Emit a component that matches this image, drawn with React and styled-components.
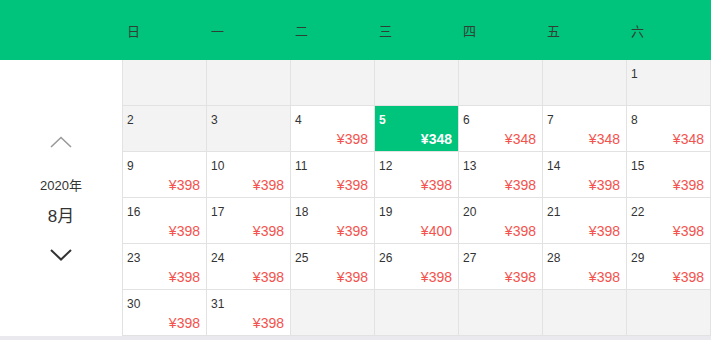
import React from "react";
import styled, { createGlobalStyle } from "styled-components";

const Global = createGlobalStyle`
  html, body { margin: 0; padding: 0; background: #eaeaee; }
  body { font-family: "Liberation Sans", "Noto Sans CJK SC", sans-serif; }
`;

const Page = styled.div`
  width: 711px;
  height: 336px;
  background: #fff;
  display: flex;
  flex-direction: column;
`;

const Header = styled.div`
  height: 60px;
  background: #00c47b;
  display: grid;
  grid-template-columns: 122px repeat(7, 84px);
  align-items: center;
`;

const WeekName = styled.div`
  padding-left: 5px;
  font-size: 13px;
  color: #2f3f36;
  font-family: "Noto Sans CJK SC", sans-serif;
`;

const Body = styled.div`
  flex: 1;
  display: flex;
`;

const Side = styled.div`
  width: 122px;
  display: flex;
  flex-direction: column;
  align-items: center;
  padding-top: 76px;
`;

const Arrow = styled.svg`
  display: block;
  margin-top: ${(p) => p.$gap || 0}px;
`;

const Year = styled.div`
  margin-top: 27px;
  font-size: 13px;
  color: #333;
  font-family: "Liberation Sans", "Noto Sans CJK SC", sans-serif;
`;

const Month = styled.div`
  margin-top: 8px;
  font-size: 17px;
  color: #333;
  font-family: "Liberation Sans", "Noto Sans CJK SC", sans-serif;
`;

const Grid = styled.div`
  display: grid;
  grid-template-columns: repeat(7, 84px);
  grid-auto-rows: 46px;
  border-left: 1px solid #e2e2e2;
`;

const Cell = styled.div`
  box-sizing: border-box;
  border-right: 1px solid #e2e2e2;
  border-bottom: 1px solid #e2e2e2;
  background: ${(p) => (p.$active ? "#00c47b" : p.$muted ? "#f3f3f3" : "#fff")};
  color: ${(p) => (p.$active ? "#fff" : "#333")};
  font-weight: ${(p) => (p.$active ? "bold" : "normal")};
  padding: 7px 6px 0 4px;
  display: flex;
  flex-direction: column;
`;

const Day = styled.div`
  font-size: 12px;
  line-height: 14px;
`;

const Price = styled.div`
  margin-top: 3px;
  text-align: right;
  font-size: 14px;
  line-height: 18px;
  color: ${(p) => (p.$active ? "#fff" : "#f4524d")};
`;

const weeks = ["日", "一", "二", "三", "四", "五", "六"];

const prices = {
  4: 398, 5: 348, 6: 348, 7: 348, 8: 348, 19: 400,
};

function buildCells() {
  const cells = [];
  for (let i = 0; i < 6; i++) cells.push({ key: "b" + i, empty: true });
  for (let d = 1; d <= 31; d++) {
    const past = d <= 3;
    cells.push({
      key: "d" + d,
      day: d,
      past,
      price: past ? null : prices[d] || 398,
      active: d === 5,
    });
  }
  while (cells.length < 42) cells.push({ key: "a" + cells.length, empty: true });
  return cells;
}

export default function App() {
  const cells = buildCells();
  return (
    <>
      <Global />
      <Page>
        <Header>
          <div />
          {weeks.map((w) => (
            <WeekName key={w}>{w}</WeekName>
          ))}
        </Header>
        <Body>
          <Side>
            <Arrow width="22" height="12" viewBox="0 0 22 12">
              <path d="M1 11 L11 1.5 L21 11" fill="none" stroke="#9a9a9a" strokeWidth="1.6" />
            </Arrow>
            <Year>2020年</Year>
            <Month>8月</Month>
            <Arrow width="22" height="12" viewBox="0 0 22 12" $gap={22}>
              <path d="M1 1 L11 10.5 L21 1" fill="none" stroke="#333" strokeWidth="2" />
            </Arrow>
          </Side>
          <Grid>
            {cells.map((c) =>
              c.empty ? (
                <Cell key={c.key} $muted />
              ) : (
                <Cell key={c.key} $muted={c.past} $active={c.active}>
                  <Day>{c.day}</Day>
                  {c.price && <Price $active={c.active}>¥{c.price}</Price>}
                </Cell>
              )
            )}
          </Grid>
        </Body>
      </Page>
    </>
  );
}
